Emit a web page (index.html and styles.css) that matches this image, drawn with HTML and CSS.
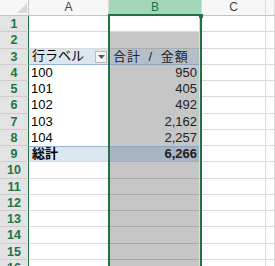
FILE: index.html
```html
<!DOCTYPE html>
<html>
<head>
    <meta charset="utf-8">
    <title>ピボットテーブル</title>
    <link rel="stylesheet" href="styles.css">
</head>
<body>
<div class="sheet">
    <div class="row head">
        <div class="corner"><svg width="10" height="10" viewBox="0 0 10 10"><polygon points="10,0 10,10 0,10" fill="#d9d9d9"/></svg></div>
        <div class="ch">A</div>
        <div class="ch sel">B</div>
        <div class="ch">C</div>
        <div class="ch"></div>
    </div>
    <div class="row">
        <div class="rh">1</div><div class="c"></div><div class="c b active"></div><div class="c"></div><div class="c"></div>
    </div>
    <div class="row">
        <div class="rh">2</div><div class="c"></div><div class="c b"></div><div class="c"></div><div class="c"></div>
    </div>
    <div class="row hd">
        <div class="rh">3</div>
        <div class="c label">行ラベル<span class="drop"><svg width="7" height="4" viewBox="0 0 7 4"><polygon points="0,0 7,0 3.5,4" fill="#5a5a5a"/></svg></span></div>
        <div class="c b">合計 / 金額</div><div class="c"></div><div class="c"></div>
    </div>
    <div class="row pv">
        <div class="rh">4</div><div class="c">100</div><div class="c b">950</div><div class="c"></div><div class="c"></div>
    </div>
    <div class="row pv">
        <div class="rh">5</div><div class="c">101</div><div class="c b">405</div><div class="c"></div><div class="c"></div>
    </div>
    <div class="row pv">
        <div class="rh">6</div><div class="c">102</div><div class="c b">492</div><div class="c"></div><div class="c"></div>
    </div>
    <div class="row pv">
        <div class="rh">7</div><div class="c">103</div><div class="c b">2,162</div><div class="c"></div><div class="c"></div>
    </div>
    <div class="row pv">
        <div class="rh">8</div><div class="c">104</div><div class="c b">2,257</div><div class="c"></div><div class="c"></div>
    </div>
    <div class="row tot">
        <div class="rh">9</div><div class="c label">総計</div><div class="c b">6,266</div><div class="c"></div><div class="c"></div>
    </div>
    <div class="row">
        <div class="rh">10</div><div class="c"></div><div class="c b"></div><div class="c"></div><div class="c"></div>
    </div>
    <div class="row">
        <div class="rh">11</div><div class="c"></div><div class="c b"></div><div class="c"></div><div class="c"></div>
    </div>
    <div class="row">
        <div class="rh">12</div><div class="c"></div><div class="c b"></div><div class="c"></div><div class="c"></div>
    </div>
    <div class="row">
        <div class="rh">13</div><div class="c"></div><div class="c b"></div><div class="c"></div><div class="c"></div>
    </div>
    <div class="row">
        <div class="rh">14</div><div class="c"></div><div class="c b"></div><div class="c"></div><div class="c"></div>
    </div>
    <div class="row">
        <div class="rh">15</div><div class="c"></div><div class="c b"></div><div class="c"></div><div class="c"></div>
    </div>
    <div class="row">
        <div class="rh">16</div><div class="c"></div><div class="c b"></div><div class="c"></div><div class="c"></div>
    </div>
    <!-- column B selection frame -->
    <div class="selection"><span class="handle"></span></div>
</div>
</body>
</html>
```
FILE: styles.css
```css
body {
    margin: 0;
    background-color: #fff;
    font-family: "Liberation Sans", "Noto Sans CJK JP", sans-serif;
    font-size: 13px;
    color: #000;
    overflow: hidden;
}

.sheet {
    position: relative;
    width: 275px;
    height: 266px;
    overflow: hidden;
}

.row {
    display: grid;
    grid-template-columns: 29px 80px 93px 64px 1fr;
    height: 16.25px;
}

.row > div {
    box-sizing: border-box;
    white-space: nowrap;
    overflow: hidden;
}

.head {
    height: 16px;
}

.corner {
    background-color: #f7f7f7;
    border-right: 1px solid #c4c4c4;
    border-bottom: 1px solid #c4c4c4;
    display: flex;
    justify-content: flex-end;
    align-items: flex-end;
    padding: 0 1px 2px 0;
}

.corner svg {
    display: block;
}

.ch {
    background-color: #f7f7f7;
    color: #444;
    font-size: 12px;
    line-height: 15px;
    text-align: center;
    border-right: 1px solid #dadada;
    border-bottom: 1px solid #c4c4c4;
}

.ch.sel {
    background-color: #a3d6b8;
    color: #217346;
}

.rh {
    background-color: #e3e3e3;
    color: #217346;
    font-weight: bold;
    font-size: 12.5px;
    line-height: 16px;
    text-align: center;
    border-right: 1px solid #217346;
    border-bottom: 1px solid #cdcdcd;
}

.c {
    border-right: 1px solid #dadada;
    border-bottom: 1px solid #dadada;
    line-height: 16px;
    padding: 0 2px;
}

.c.b {
    background-color: #c6c6c6;
    border-bottom-color: #ababab;
    color: #222;
    text-align: right;
    padding-right: 4px;
}

.c.b.active {
    background-color: #fff;
    border-bottom-color: #dadada;
}

.label {
    padding-left: 3px;
}

/* pivot table */
.pv .c:nth-child(2),
.pv .c.b {
    border-bottom-color: transparent;
}

.hd .c:nth-child(2) {
    background-color: #dce6f1;
    border-bottom-color: #95b3d7;
    display: flex;
    align-items: center;
    justify-content: space-between;
    padding-right: 1px;
}

.hd .c.b {
    background-color: #b5bfca;
    border-bottom-color: #8fa6c0;
    text-align: left;
    padding-left: 4px;
    letter-spacing: 1px;
    word-spacing: 3px;
}

.drop {
    width: 12px;
    height: 12px;
    box-sizing: border-box;
    border: 1px solid #b9b9b9;
    background-color: #f4f4f4;
    display: flex;
    align-items: center;
    justify-content: center;
    margin-top: 1px;
}

.drop svg {
    display: block;
}

.tot .c {
    font-weight: bold;
}

.tot .c:nth-child(2) {
    background-color: #dce6f1;
    box-shadow: inset 0 1px 0 #95b3d7;
}

.tot .c.b {
    background-color: #a8b4c2;
    box-shadow: inset 0 1px 0 #8fa6c0;
}

.selection {
    position: absolute;
    left: 108px;
    top: 14px;
    width: 94px;
    bottom: -4px;
    box-sizing: border-box;
    border: 2px solid #217346;
    box-shadow: inset -1px 0 0 #dcdcdc;
    pointer-events: none;
}

.handle {
    position: absolute;
    right: -3px;
    top: -2px;
    width: 4px;
    height: 4px;
    background-color: #217346;
}
```
